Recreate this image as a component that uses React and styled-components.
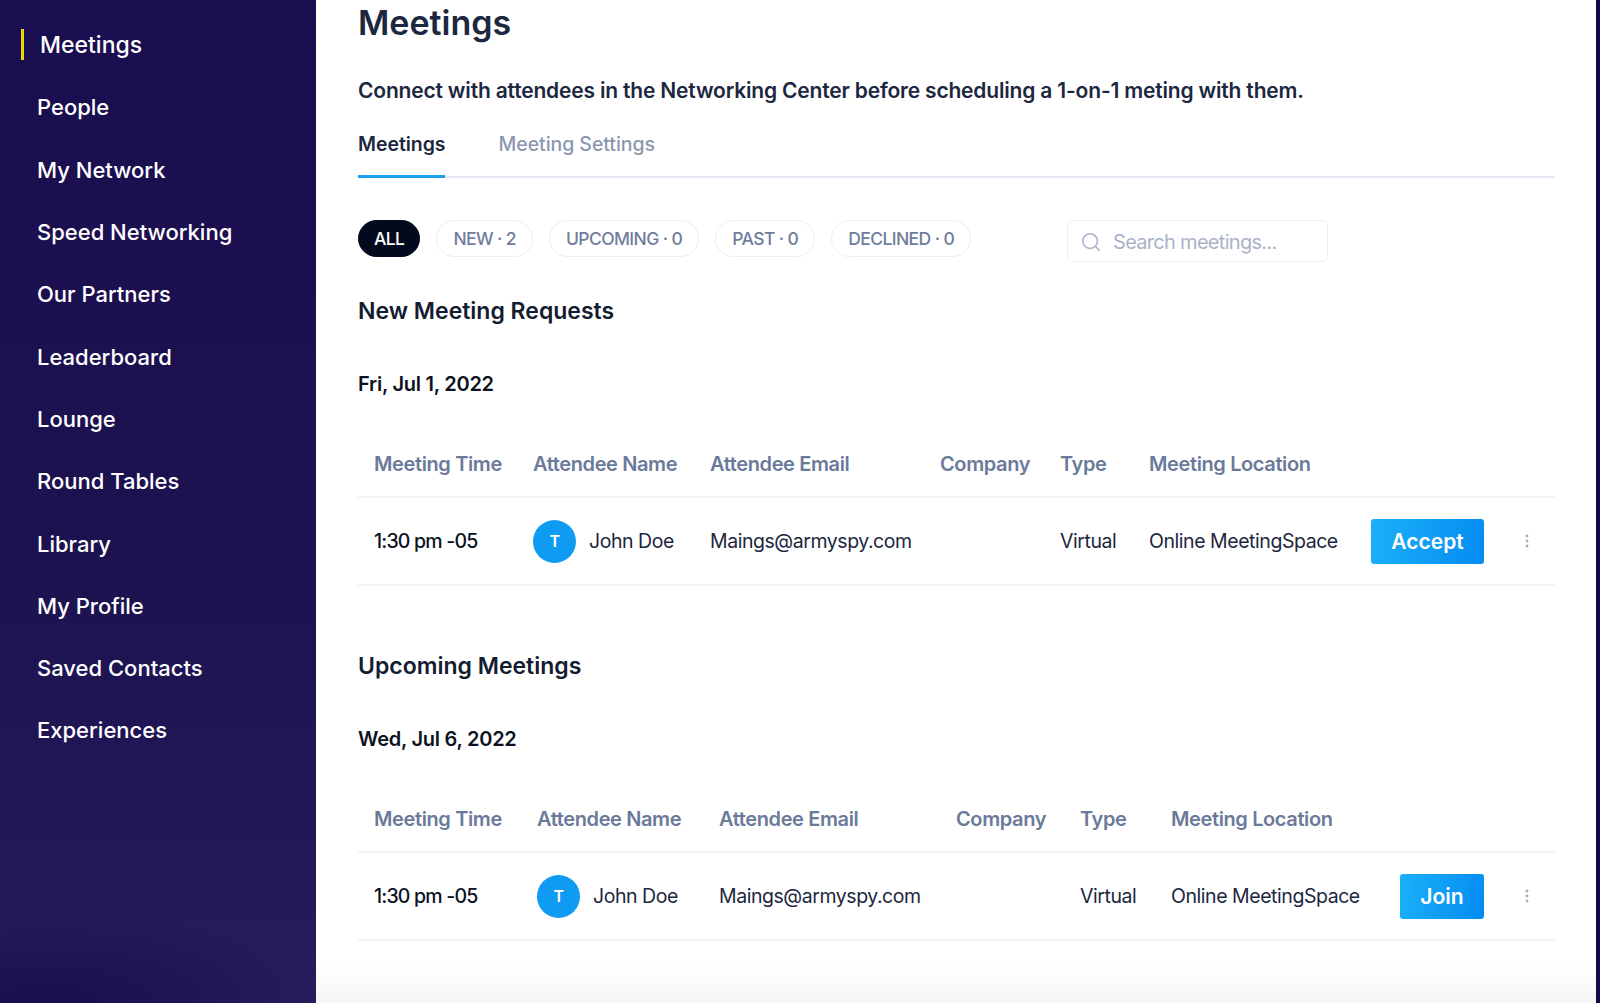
import React from 'react';
import styled, { createGlobalStyle } from 'styled-components';
import { Search } from 'lucide-react';

const navItems = ['Meetings', 'People', 'My Network', 'Speed Networking', 'Our Partners', 'Leaderboard', 'Lounge', 'Round Tables', 'Library', 'My Profile', 'Saved Contacts', 'Experiences'];
const filters = ['ALL', 'NEW · 2', 'UPCOMING · 0', 'PAST · 0', 'DECLINED · 0'];
const headers = ['Meeting Time', 'Attendee Name', 'Attendee Email', 'Company', 'Type', 'Meeting Location'];

function MeetingTable({ cols, action, buttonWidth }) {
  return (
    <Table>
      <HeadRow $cols={cols}>
        {headers.map((h) => <span key={h}>{h}</span>)}
      </HeadRow>
      <BodyRow $cols={cols}>
        <Time>1:30 pm -05</Time>
        <Attendee><Avatar>T</Avatar>John Doe</Attendee>
        <span>Maings@armyspy.com</span>
        <span></span>
        <span>Virtual</span>
        <span>Online MeetingSpace</span>
        <Actions>
          <ActionButton $width={buttonWidth}>{action}</ActionButton>
          <Dots viewBox="0 0 4 14" width="4" height="14">
            <circle cx="2" cy="2" r="1.4" />
            <circle cx="2" cy="7" r="1.4" />
            <circle cx="2" cy="12" r="1.4" />
          </Dots>
        </Actions>
      </BodyRow>
    </Table>
  );
}

export default function App() {
  return (
    <Page>
      <GlobalStyle />
      <Sidebar>
        {navItems.map((item, i) => <NavItem key={item} $active={i === 0}>{item}</NavItem>)}
      </Sidebar>
      <Main>
        <Title>Meetings</Title>
        <Intro>Connect with attendees in the Networking Center before scheduling a 1-on-1 meting with them.</Intro>
        <Tabs>
          <Tab $active>Meetings</Tab>
          <Tab>Meeting Settings</Tab>
        </Tabs>
        <FilterBar>
          <Pills>
            {filters.map((f, i) => <Pill key={f} $active={i === 0}>{f}</Pill>)}
          </Pills>
          <SearchBox>
            <Search size={22} strokeWidth={1.75} />
            <span>Search meetings...</span>
          </SearchBox>
        </FilterBar>
        <SectionTitle>New Meeting Requests</SectionTitle>
        <DateLabel>Fri, Jul 1, 2022</DateLabel>
        <MeetingTable cols="159px 177px 230px 120px 89px 1fr" action="Accept" buttonWidth={113} />
        <SectionTitle $upcoming>Upcoming Meetings</SectionTitle>
        <DateLabel>Wed, Jul 6, 2022</DateLabel>
        <MeetingTable cols="163px 182px 237px 124px 91px 1fr" action="Join" buttonWidth={84} />
      </Main>
      <Edge />
    </Page>
  );
}

const GlobalStyle = createGlobalStyle`
  html, body {
    margin: 0;
    padding: 0;
    background: #fff;
  }
  * {
    box-sizing: border-box;
  }
`;

const Page = styled.div`
  display: flex;
  width: 1600px;
  height: 1003px;
  overflow: hidden;
  font-family: Inter, "Liberation Sans", sans-serif;
  color: #1c2740;
`;

const Sidebar = styled.nav`
  width: 316px;
  flex-shrink: 0;
  padding-top: 14px;
  display: flex;
  flex-direction: column;
  background:
    radial-gradient(ellipse 280px 90px at 50px 1003px, #190d4d 0%, rgba(25, 13, 77, 0) 100%),
    linear-gradient(180deg, #1b0e50 0%, #1d1250 55%, #221a59 90%, #261e5e 100%);
`;

const NavItem = styled.div`
  height: 62.3px;
  display: flex;
  align-items: center;
  color: #fff;
  font-size: ${(p) => (p.$active ? '23px' : '22px')};
  font-weight: 500;
  padding-left: ${(p) => (p.$active ? '19px' : '37px')};
  margin-left: ${(p) => (p.$active ? '21px' : '0')};
  position: relative;

  ${(p) => p.$active && `
    &::before {
      content: '';
      position: absolute;
      left: 0;
      top: 15px;
      width: 3px;
      height: 31px;
      background: #e6d80a;
    }
  `}
`;

const Main = styled.main`
  flex: 1;
  padding: 0 41px 0 42px;
  background: linear-gradient(180deg, #fff 0%, #fff 96%, #f5f5f6 100%);
`;

const Edge = styled.div`
  width: 4px;
  flex-shrink: 0;
  background: #120a4c;
`;

const Title = styled.h1`
  margin: 0;
  height: 46px;
  line-height: 46px;
  font-size: 34px;
  font-weight: 600;
`;

const Intro = styled.p`
  margin: 30px 0 0;
  line-height: 30px;
  font-size: 21px;
  font-weight: 600;
  letter-spacing: -0.18px;
`;

const Tabs = styled.div`
  display: flex;
  gap: 53px;
  margin-top: 20px;
  border-bottom: 2px solid #e4e8f3;
  height: 52px;
`;

const Tab = styled.div`
  height: 52px;
  padding-top: 4px;
  line-height: 28px;
  font-size: 19.5px;
  letter-spacing: -0.05px;
  font-weight: ${(p) => (p.$active ? 600 : 500)};
  color: ${(p) => (p.$active ? '#1c2740' : '#8b97b0')};
  border-bottom: 3px solid ${(p) => (p.$active ? '#1ba1f2' : 'transparent')};
`;

const FilterBar = styled.div`
  display: flex;
  align-items: flex-start;
  margin-top: 42px;
`;

const Pills = styled.div`
  display: flex;
  gap: 16px;
  width: 709px;
`;

const Pill = styled.div`
  height: 37px;
  padding: 0 ${(p) => (p.$active ? '15px' : '16px')};
  display: flex;
  align-items: center;
  border-radius: 19px;
  font-size: 17.5px;
  letter-spacing: -0.6px;
  font-weight: 500;
  color: ${(p) => (p.$active ? '#fff' : '#6f7d9c')};
  background: ${(p) => (p.$active ? '#040a1e' : '#fff')};
  border: 1px solid ${(p) => (p.$active ? '#040a1e' : '#eaedf5')};
`;

const SearchBox = styled.div`
  width: 261px;
  height: 42px;
  display: flex;
  align-items: center;
  gap: 11px;
  padding: 1px 0 0 12px;
  border: 1px solid #edf0f7;
  border-radius: 5px;
  font-size: 20px;
  letter-spacing: -0.7px;
  color: #a9b3c8;
`;

const SectionTitle = styled.h2`
  margin: ${(p) => (p.$upcoming ? '64px' : '33px')} 0 0;
  line-height: 32px;
  font-size: 23px;
  font-weight: 600;
  color: #131c30;
`;

const DateLabel = styled.div`
  margin-top: 41px;
  line-height: 32px;
  font-size: 20px;
  letter-spacing: -0.25px;
  font-weight: 600;
  color: #0c1222;
`;

const Table = styled.div`
  margin-top: 30px;
`;

const HeadRow = styled.div`
  display: grid;
  grid-template-columns: ${(p) => p.$cols};
  height: 68px;
  padding: 2px 0 0 16px;
  align-items: center;
  border-bottom: 2px solid #f3f4fa;
  font-size: 20px;
  letter-spacing: -0.38px;
  font-weight: 600;
  color: #6b7a9b;
`;

const BodyRow = styled.div`
  display: grid;
  grid-template-columns: ${(p) => p.$cols};
  height: 88px;
  padding-left: 16px;
  align-items: center;
  border-bottom: 2px solid #f3f4fa;
  font-size: 19.5px;
  letter-spacing: -0.45px;
  color: #1c2740;
  position: relative;
`;

const Time = styled.span`
  color: #0c1222;
  font-weight: 500;
  letter-spacing: -0.8px;
`;

const Attendee = styled.span`
  display: flex;
  align-items: center;
  gap: 13px;
`;

const Avatar = styled.span`
  width: 43px;
  height: 43px;
  border-radius: 50%;
  background: #0f9bf2;
  color: #fff;
  font-size: 16px;
  font-weight: 600;
  display: flex;
  align-items: center;
  justify-content: center;
`;

const Actions = styled.span`
  position: absolute;
  right: 26px;
  top: 0;
  bottom: 0;
  display: flex;
  align-items: center;
  gap: 41px;
`;

const ActionButton = styled.button`
  width: ${(p) => p.$width}px;
  height: 45px;
  border: none;
  border-radius: 3px;
  background: linear-gradient(100deg, #1cb0f8 0%, #038cf2 100%);
  color: #fff;
  font-family: inherit;
  font-size: 21px;
  font-weight: 600;
`;

const Dots = styled.svg`
  fill: #a3adc2;
`;
